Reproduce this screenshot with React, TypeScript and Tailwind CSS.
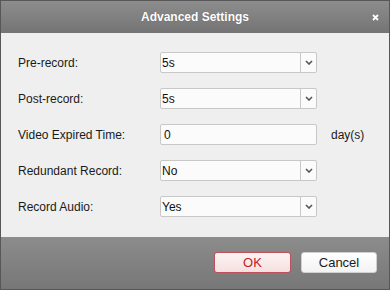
import { useState } from "react";

const font = { fontFamily: '"Liberation Sans", Arial, sans-serif' };

function Chevron() {
  return (
    <svg width="8" height="5" viewBox="0 0 8 5" className="block">
      <polyline points="1,1 4,4 7,1" fill="none" stroke="#555" strokeWidth="1.6" />
    </svg>
  );
}

function SelectBox({ value }: { value: string }) {
  return (
    <div className="flex h-[21px] w-[157px] rounded-[2px] border border-[#c8c8c8] bg-[#fbfbfb]">
      <div className="flex flex-1 items-center pl-[1px] text-[12px] text-[#111]">{value}</div>
      <div className="flex w-[16px] items-center justify-center border-l border-[#c8c8c8]">
        <Chevron />
      </div>
    </div>
  );
}

function Row({ label, children }: { label: string; children: React.ReactNode }) {
  return (
    <div className="flex h-[21px] items-center">
      <div className="w-[142px] text-[12px] text-[#1a1a1a]">{label}</div>
      {children}
    </div>
  );
}

export default function App() {
  const [days] = useState("0");

  return (
    <div
      style={font}
      className="flex h-[290px] w-[390px] flex-col border border-[#575757] bg-[#efefef]"
    >
      {/* Title bar */}
      <div className="relative flex h-[32px] items-center justify-center bg-gradient-to-b from-[#8d8d8d] to-[#747474]">
        <span className="text-[12px] font-bold text-white [text-shadow:0_0_1px_rgba(0,0,0,0.3)]">
          Advanced Settings
        </span>
        <svg width="7" height="7" viewBox="0 0 7 7" className="absolute right-[10px] top-[13px]">
          <path d="M1 1L6 6M6 1L1 6" stroke="#fff" strokeWidth="1.8" />
        </svg>
      </div>

      {/* Body */}
      <div className="flex flex-1 flex-col gap-[15px] pl-[17px] pt-[19px]">
        <Row label="Pre-record:">
          <SelectBox value="5s" />
        </Row>
        <Row label="Post-record:">
          <SelectBox value="5s" />
        </Row>
        <Row label="Video Expired Time:">
          <div className="flex h-[21px] w-[157px] items-center rounded-[2px] border border-[#c8c8c8] bg-[#fbfbfb] pl-[3px] text-[12px] text-[#111]">
            {days}
          </div>
          <span className="ml-[14px] text-[12px] text-[#1a1a1a]">day(s)</span>
        </Row>
        <Row label="Redundant Record:">
          <SelectBox value="No" />
        </Row>
        <Row label="Record Audio:">
          <SelectBox value="Yes" />
        </Row>
      </div>

      {/* Footer */}
      <div className="flex h-[52px] justify-end gap-[10px] bg-gradient-to-b from-[#8c8c8c] to-[#777777] pr-[12px] pt-[15px]">
        <button className="h-[21px] w-[77px] rounded-[3px] border border-[#c0505a] bg-gradient-to-b from-[#fdf3f3] to-[#f6e0e0] text-[13px] text-[#c3202a]">
          OK
        </button>
        <button className="h-[21px] w-[76px] rounded-[3px] border border-[#d0d0d0] bg-gradient-to-b from-[#ffffff] to-[#f3f3f3] text-[13px] text-[#1a1a1a]">
          Cancel
        </button>
      </div>
    </div>
  );
}
